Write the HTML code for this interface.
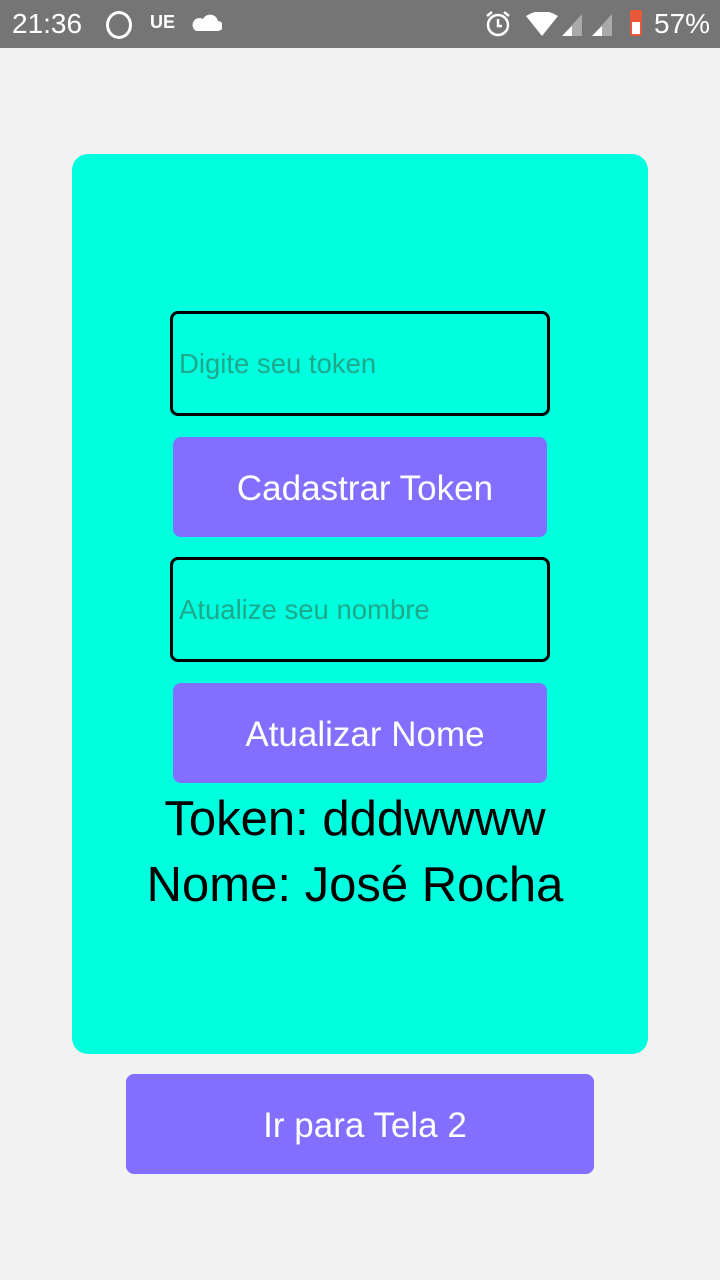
<html><head><style>
body{margin:0;width:720px;height:1280px;background:#f2f2f2;font-family:"Liberation Sans",sans-serif;position:relative;overflow:hidden}
.a{position:absolute}
.sb{left:0;top:0;width:720px;height:48px;background:#757575;color:#fff}
.card{left:72px;top:154px;width:576px;height:900px;background:#00ffdf;border-radius:16px}
.in{left:170px;width:374px;height:99px;border:3px solid #000;border-radius:8px;color:#1ea88c;font-size:27.5px;box-sizing:content-box}
.in span{position:absolute;left:6px;top:34px}
.btn{background:#826fff;border-radius:8px;color:#fff;font-size:35px;text-align:center;line-height:104px;padding-left:10px;box-sizing:border-box}
.t{left:67px;width:576px;text-align:center;font-size:49px;color:#000}
</style></head><body>
<div class="a sb">
<div class="a" style="left:12px;top:8px;font-size:28px">21:36</div>
<div class="a" style="left:106px;top:11px;width:20px;height:22px;border:3px solid #fff;border-radius:50%"></div>
<div class="a" style="left:150px;top:12px;font-size:18px;font-weight:bold">UE</div>
<svg class="a" style="left:192px;top:13px" width="30" height="20"><path d="M4 18h22a5 5 0 0 0 0-10a8 8 0 0 0-15-2a6 6 0 0 0-7 12z" fill="#fff"/></svg>
<svg class="a" style="left:484px;top:10px" width="28" height="28"><circle cx="14" cy="15" r="10" fill="none" stroke="#fff" stroke-width="2.5"/><path d="M14 9v7h4M3 6l5-4M25 6l-5-4" stroke="#fff" stroke-width="2.5" fill="none"/></svg>
<svg class="a" style="left:526px;top:12px" width="32" height="24"><path d="M0 4Q16-6 32 4L16 24z" fill="#fff"/></svg>
<svg class="a" style="left:562px;top:14px" width="24" height="22"><path d="M0 22L20 0v22z" fill="#aaa"/><path d="M0 22L10 12v10z" fill="#fff"/></svg>
<svg class="a" style="left:592px;top:14px" width="24" height="22"><path d="M0 22L20 0v22z" fill="#aaa"/><path d="M0 22L10 12v10z" fill="#fff"/></svg>
<div class="a" style="left:630px;top:10px;width:12px;height:26px;background:#e8593a;border-radius:2px"><div class="a" style="left:2px;top:12px;width:8px;height:12px;background:#fff"></div></div>
<div class="a" style="left:654px;top:8px;font-size:28px">57%</div>
</div>
<div class="a card"></div>
<div class="a in" style="top:311px"><span>Digite seu token</span></div>
<div class="a btn" style="left:173px;top:437px;width:374px;height:100px">Cadastrar Token</div>
<div class="a in" style="top:557px"><span>Atualize seu nombre</span></div>
<div class="a btn" style="left:173px;top:683px;width:374px;height:100px">Atualizar Nome</div>
<div class="a t" style="top:791px">Token: dddwwww</div>
<div class="a t" style="top:857px">Nome: José Rocha</div>
<div class="a btn" style="left:126px;top:1074px;width:468px;height:100px">Ir para Tela 2</div>
</body></html>
